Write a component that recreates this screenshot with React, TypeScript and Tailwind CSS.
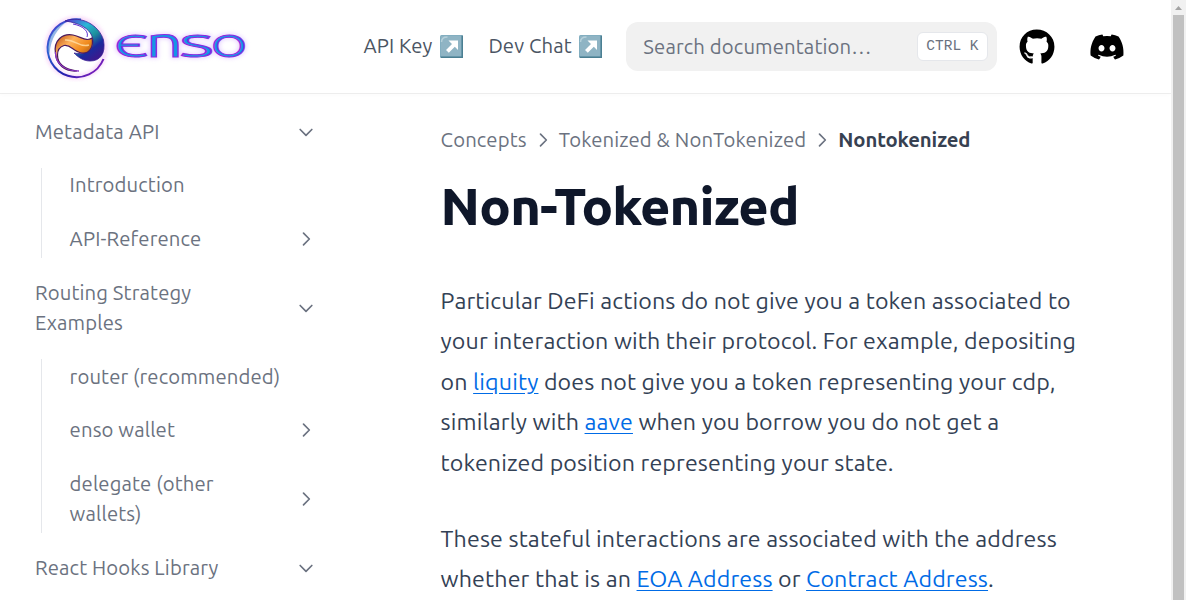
import React from 'react';
import type { ReactNode } from 'react';
import { FaGithub, FaDiscord } from 'react-icons/fa';

const Chevron = ({ open = false }: { open?: boolean }) => (
  <svg viewBox="0 0 24 24" fill="none" stroke="currentColor" strokeWidth="2" strokeLinecap="round" strokeLinejoin="round" className={open ? 'size-[20px] shrink-0 rotate-90' : 'size-[20px] shrink-0'}>
    <path d="M9 5l7 7-7 7" />
  </svg>
);

const ArrowBadge = () => (
  <svg viewBox="0 0 23 23" className="h-[23px] w-[23px]">
    <rect x="0" y="0" width="23" height="23" rx="1.5" fill="#82aec0" />
    <path d="M0.5 21.5h21v-21h1.5v22.5h-22z" fill="#4b7f92" />
    <rect x="1" y="1" width="20" height="20" rx="1" fill="#8fb4c4" />
    <path d="M1.5 7q0-5 6-5" stroke="#b5d0da" strokeWidth="1.5" fill="none" />
    <path d="M8.5 5.500h9.500v9.500l-3.200-3.200-6 6-2.800-2.800 6-6z" fill="#fff" />
  </svg>
);

const letters = [
  { ch: 'Є', x: 79, w: 34, size: 32 },
  { ch: 'n', x: 111, w: 37, size: 43 },
  { ch: 'S', x: 144.5, w: 34, size: 32 },
  { ch: 'O', x: 176, w: 36, size: 32 },
];

const Word = () => (
  <>
    {letters.map((l) => (
      <text key={l.ch} x={l.x} y="44.5" fontSize={l.size} textLength={l.w} lengthAdjust="spacingAndGlyphs">{l.ch}</text>
    ))}
  </>
);

const Logo = () => (
  <svg viewBox="0 0 220 70" className="h-[70px] w-[220px] shrink-0 tracking-normal" role="img" aria-label="Enso">
    <defs>
      <linearGradient id="ring" x1="0" y1="0" x2="1" y2="1">
        <stop offset="0" stopColor="#5a2fd0" />
        <stop offset=".3" stopColor="#2a5fd0" />
        <stop offset=".6" stopColor="#1f1fae" />
        <stop offset="1" stopColor="#9a1fc0" />
      </linearGradient>
      <linearGradient id="teal" x1="0" y1="0" x2=".7" y2="1">
        <stop offset="0" stopColor="#5a2fd0" />
        <stop offset=".35" stopColor="#2bb8d8" />
        <stop offset=".6" stopColor="#1d8f9c" />
        <stop offset=".8" stopColor="#1b2a9e" />
        <stop offset="1" stopColor="#3a1a8e" />
      </linearGradient>
      <linearGradient id="flame" x1="0" y1="0" x2="1" y2="1">
        <stop offset="0" stopColor="#b8480c" />
        <stop offset=".3" stopColor="#ffb35c" />
        <stop offset=".55" stopColor="#f08a1c" />
        <stop offset="1" stopColor="#4a1c16" />
      </linearGradient>
      <filter id="glow" x="-20%" y="-20%" width="140%" height="140%">
        <feGaussianBlur stdDeviation="2" />
      </filter>
    </defs>
    <circle cx="41" cy="36" r="29" fill="none" stroke="#f0a6f0" strokeWidth="3" filter="url(#glow)" opacity=".7" />
    <path d="M68.5 47A29 29 0 1 1 46 7.5" fill="none" stroke="url(#ring)" strokeWidth="2" />
    <path d="M30 9C46 3 64 13 68.5 28C71 42 65 49 55 49C48 49 43 45 39 41C48 43 58 40 58 30C58 18 46 11 30 9Z" fill="url(#teal)" stroke="#3b1d95" strokeWidth=".8" />
    <path d="M20.500 42C18 28 28 21 38 23C47 25 51 30 57 26C59 35 54 42 47 41C38 40 36 32 29 33.500C24 35 22.500 38 22.500 43C22.500 51 28 57 42 59C29 60 21.500 52 20.500 42Z" fill="url(#flame)" stroke="#4b1a5c" strokeWidth="1.200" />
    <path d="M30 28C40 27 44 36 54 33" fill="none" stroke="#ffe0a8" strokeWidth="1.500" opacity=".8" />
    <path d="M38 12C49 14 54 20 52 25" fill="none" stroke="#5a2fd0" strokeWidth="1" />
    <path d="M12.500 38C12.500 24 20 14 31 10C23 17 16 25 14.500 42Z" fill="#2f7fd0" opacity=".5" />
    <path d="M20.500 40C20 51 29 59 44 59" fill="none" stroke="#8b35c8" strokeWidth="1.300" />
    <g fontFamily="Ubuntu, sans-serif">
      <g fill="#d9b8ff" stroke="#d9b8ff" strokeWidth="3" filter="url(#glow)" opacity=".6"><Word /></g>
      <g fill="#1496e6" stroke="#8a2be0" strokeWidth="1"><Word /></g>
    </g>
  </svg>
);

const Item = ({ children, arrow, open }: { children: ReactNode; arrow?: boolean; open?: boolean }) => (
  <div className="flex items-center justify-between pr-[5px] leading-[30.45px]">
    <span className="max-w-[215px]">{children}</span>
    {arrow && <Chevron open={open} />}
  </div>
);

const Group = ({ children }: { children: ReactNode }) => (
  <div className="ml-[6px] flex flex-col gap-[23.2px] border-l border-[#e5e7eb] pt-[2.6px] pb-[3.4px] pl-[27.6px]">{children}</div>
);

const A = ({ children }: { children: ReactNode }) => (
  <a className="text-[#006be6] underline decoration-from-font [text-underline-position:from-font]">{children}</a>
);

export default function App() {
  return (
    <div className="flex h-[600px] w-[1186px] overflow-hidden bg-white font-[Ubuntu,'Noto_Sans',sans-serif] text-[20.3px] tracking-[0.13px]">
      <div className="flex min-w-0 flex-1 flex-col">
        <header className="flex h-[93px] shrink-0 items-center pl-[35px] shadow-[0_2px_4px_rgba(0,0,0,.02),0_1px_0_rgba(0,0,0,.06)]">
          <Logo />
          <span className="ml-[108.4px] flex w-[99.6px] shrink-0 items-center justify-between text-[#4b5563]">API Key <ArrowBadge /></span>
          <span className="ml-[25.4px] flex w-[113.6px] shrink-0 items-center justify-between text-[#4b5563]">Dev Chat <ArrowBadge /></span>
          <div className="ml-[24px] flex h-[49px] w-[371px] shrink-0 items-center justify-between rounded-[12px] bg-[#f1f1f1] pr-[9px] pl-[17.4px] text-[#6b7280]">
            <span className="pt-[1px]">Search documentation…</span>
            <kbd className="flex h-[29px] w-[71px] items-center justify-center rounded-[6px] border border-[#e5e7eb] bg-white font-['Liberation_Mono',monospace] text-[14.5px] tracking-normal whitespace-pre">CTRL K</kbd>
          </div>
          <FaGithub className="ml-[22px] size-[36px] shrink-0 text-black" />
          <FaDiscord className="ml-[34px] size-[36px] shrink-0 text-black" />
        </header>
        <div className="flex flex-1 gap-[119.6px] pl-[35px]">
          <aside className="w-[286px] shrink-0 pt-[23.6px] text-[#6b7280]">
            <Item arrow open>Metadata API</Item>
            <div className="pt-[20.8px] pb-[19.6px]">
              <Group>
                <Item>Introduction</Item>
                <Item arrow>API-Reference</Item>
              </Group>
            </div>
            <Item arrow open>Routing Strategy Examples</Item>
            <div className="pt-[20.6px] pb-[20px]">
              <Group>
                <Item>router (recommended)</Item>
                <Item arrow>enso wallet</Item>
                <Item arrow>delegate (other<br />wallets)</Item>
              </Group>
            </div>
            <Item arrow open>React Hooks Library</Item>
          </aside>
          <main className="min-w-0 flex-1 pt-[32px]">
            <nav className="flex items-center gap-[6px] leading-[30px] text-[#6b7280]">Concepts<Chevron />Tokenized &amp; NonTokenized<Chevron /><span className="font-semibold tracking-[-0.1px] text-[#374151]">Nontokenized</span></nav>
            <h1 className="mt-[22px] text-[52.2px] leading-[58px] font-extrabold tracking-[-0.8px] text-[#0f172a]">Non-Tokenized</h1>
            <p className="mt-[44.6px] text-[23.2px] leading-[40.6px] whitespace-nowrap text-[#334155]">
              Particular DeFi actions do not give you a token associated to<br />
              your interaction with their protocol. For example, depositing<br />
              on <A>liquity</A> does not give you a token representing your cdp,<br />
              similarly with <A>aave</A> when you borrow you do not get a<br />
              tokenized position representing your state.
            </p>
            <p className="mt-[35px] text-[23.2px] leading-[40.6px] whitespace-nowrap text-[#334155]">
              These stateful interactions are associated with the address<br />
              whether that is an <A>EOA Address</A> or <A>Contract Address</A>.
            </p>
          </main>
        </div>
      </div>
      <div className="flex w-[15px] shrink-0 flex-col items-center bg-[#f1f1f1]">
        <svg viewBox="0 0 15 15" className="size-[15px] shrink-0"><path d="M4 10L7.5 6L11 10Z" fill="#a3a3a3" /></svg>
        <div className="w-[11px] flex-1 bg-[#c1c1c1]" />
      </div>
    </div>
  );
}
